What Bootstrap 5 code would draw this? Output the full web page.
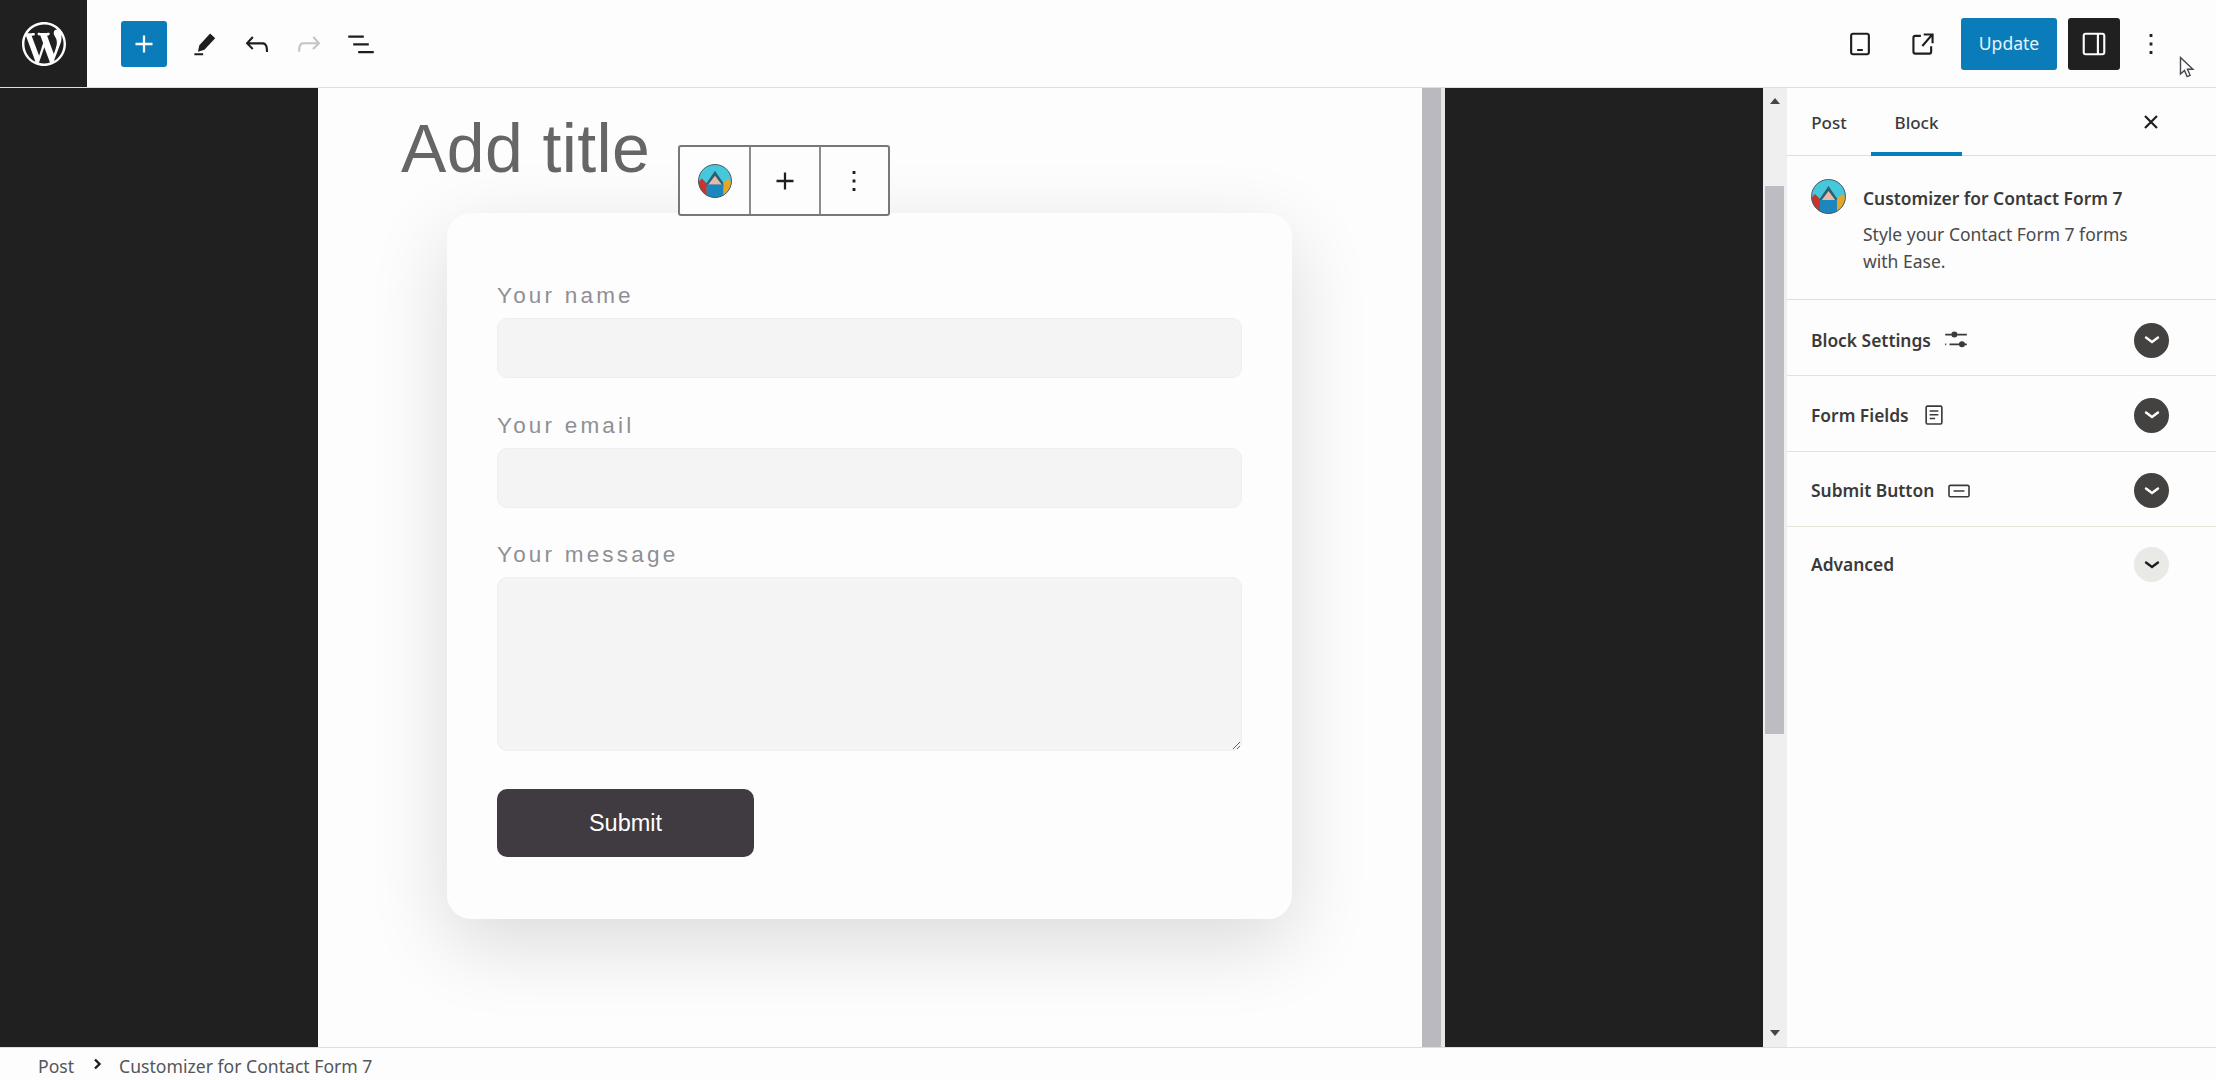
<!DOCTYPE html>
<html lang="en">
<head>
  <meta charset="UTF-8" />
  <meta name="viewport" content="width=device-width, initial-scale=1.0"/>
  <title>Edit Post</title>
  <link href="https://cdn.jsdelivr.net/npm/bootstrap@5.3.3/dist/css/bootstrap.min.css" rel="stylesheet" />
<style>
  html, body { height: 100%; }
  body {
    background: #fdfdfd;
    color: #3a3a3a;
    font-family: "Noto Sans", sans-serif;
    overflow: hidden;
  }
  svg { display: block; fill: currentColor; }

  /* top bar */
  .top-bar { height: 88px; border-bottom: 1px solid #dedee2; flex-shrink: 0; }
  .wp-logo { width: 87px; height: 87px; background: #202020; color: #fdfdfd; }
  .tool-btn { width: 52px; height: 52px; color: #1e1e1e; }
  .tool-btn svg { width: 34px; height: 34px; }
  .tool-off { color: #c4c4c8; }
  .add-btn { width: 46px; height: 46px; background: #0a7cba; color: #fdfdfd; border-radius: 3px; margin-left: 34px; margin-right: 12px; }
  .add-btn svg { width: 34px; height: 34px; }
  .update-btn {
    width: 96px; height: 52px; padding: 0; border: 0; border-radius: 3px;
    background: #0a7cba; color: #e4f3fb; font-size: 17.5px; margin: 0 11px 0 12px;
  }
  .side-btn { background: #202020; color: #fdfdfd; border-radius: 3px; }
  .more-btn { margin-left: 5px; margin-right: 39px; }
  .open-btn { margin-left: 11px; }
  .mouse-arrow { position: absolute; left: 2179px; top: 56px; width: 16px; height: 23px; }

  /* editor area */
  .work-area { min-height: 0; }
  .dark-gutter { width: 318px; background: #202020; flex-shrink: 0; }
  .post-canvas { width: 1104px; background: #fdfdfd; flex-shrink: 0; }
  .canvas-bar { width: 19px; background: #b9b9bf; flex-shrink: 0; }
  .canvas-strip { width: 4px; background: #e6e6e6; flex-shrink: 0; }
  .post-title {
    font-family: "Liberation Sans", Arial, sans-serif;
    font-size: 68px; line-height: 78px; letter-spacing: .4px; color: #666; margin: 21px 0 0 83px;
  }
  .block-tools {
    position: absolute; left: 360px; top: 57px; height: 71px; width: 212px;
    border: 2px solid #77777c; border-radius: 3px; background: #fdfdfd; z-index: 2;
  }
  .block-tools > div { width: 70px; color: #1e1e1e; }
  .block-tools > div + div { border-left: 2px solid #8c8c8c; }
  .block-tools .tool-icon { width: 34px; height: 34px; }

  .form-shell {
    width: 845px; height: 706px; margin: 26px 0 0 129px; padding: 67px 50px 0;
    border: 0; border-radius: 24px; background: #fdfdfd;
    box-shadow: 0 24px 80px rgba(0, 0, 0, .14);
    font-family: "Liberation Sans", Arial, sans-serif;
  }
  .form-shell label {
    font-size: 22.5px; line-height: 30px; letter-spacing: 3.2px; color: #8f8f95;
    padding-top: 1px; margin: 0 0 7px; display: block;
  }
  .form-shell .form-control {
    background: #f4f4f4; border: 1px solid #efefef; border-radius: 10px; box-shadow: none;
  }
  .form-shell input.form-control { height: 60px; margin-bottom: 32px; }
  .form-shell input#your-email { margin-bottom: 31px; }
  .form-shell textarea.form-control { height: 174px; resize: vertical; }
  .send-btn {
    width: 257px; height: 68px; margin-top: 38px; padding: 2px 0 0; border: 0; border-radius: 10px;
    background: #3f3b40; color: #fff; font-size: 23.5px;
  }

  /* inner scrollbar */
  .side-scroll { width: 24px; background: #efeff0; flex-shrink: 0; }
  .side-scroll .thumb { position: absolute; left: 2px; right: 3px; top: 98px; height: 548px; background: #bcbcc2; }
  .side-scroll .arrow-up, .side-scroll .arrow-down {
    position: absolute; left: 7px; width: 0; height: 0;
    border-left: 5px solid transparent; border-right: 5px solid transparent;
  }
  .side-scroll .arrow-up { top: 10px; border-bottom: 6px solid #45454a; }
  .side-scroll .arrow-down { bottom: 11px; border-top: 6px solid #45454a; }

  /* settings sidebar */
  .settings { width: 429px; flex-shrink: 0; background: #fdfdfd; }
  .settings-tabs { height: 68px; border-bottom: 1px solid #dedee2; padding: 0 48px 0 0; flex-shrink: 0; }
  .settings-tabs .nav-link {
    color: #3a3a3a; font-size: 17px; font-weight: 500; padding: 2px 0 0; height: 68px; line-height: 66px;
    text-align: center; border-radius: 0;
  }
  .tab-post { width: 84px; }
  .tab-block { width: 91px; border-bottom: 4px solid #0a7cba; }
  .tab-close { width: 34px; height: 34px; color: #1e1e1e; }
  .tab-close svg { width: 18px; height: 18px; fill: none; stroke: currentColor; stroke-width: 2.2; }
  .block-info { height: 144px; padding: 23px 24px 0; border-bottom: 1px solid #dedee2; flex-shrink: 0; }
  .block-info > div { margin-left: 1px; }
  .block-info h2 { font-size: 17.4px; line-height: 22px; font-weight: 600; margin: 8px 0 12px; color: #3a3a3a; }
  .block-info p { font-size: 17.5px; line-height: 27px; margin: 0; color: #4a4a4a; }
  .plugin-icon { width: 35px; height: 35px; flex-shrink: 0; }
  .panel-row {
    background: transparent; border: 0; border-bottom: 1px solid #e2e2d8; border-radius: 0;
    padding: 3px 47px 0 24px; font-size: 17.4px; font-weight: 600; color: #3a3a3a;
  }
  .panel-row.row-a { height: 76px; }
  .panel-row.row-top { padding-top: 5px; }
  .panel-row.row-b { height: 75px; }
  .panel-row.row-last { height: 75px; padding-top: 0; border-bottom: 0; }
  .panel-row .row-icon { width: 26px; height: 26px; margin-left: 12px; color: #3a3a3a; }
  .toggle-dot { width: 35px; height: 35px; border-radius: 50%; background: #444240; color: #fdfdfd; margin-left: auto; }
  .toggle-dot.soft { background: #e9e9e6; color: #1e1e1e; }
  .toggle-dot svg { width: 18px; height: 18px; fill: none; stroke: currentColor; stroke-width: 2.4; }

  /* breadcrumb */
  .crumbs { height: 33px; border-top: 1px solid #dedee2; padding: 5px 0 0 38px; font-size: 17.6px; color: #55555a; flex-shrink: 0; }
  .crumbs svg { width: 10px; height: 12px; margin: 0 17px 6px 18px; color: #1e1e1e; fill: none; stroke: currentColor; stroke-width: 2.4; }
</style>
</head>
<body class="d-flex flex-column">
  <svg width="0" height="0" class="position-absolute">
    <defs>
      <symbol id="plugin-logo" viewBox="0 0 35 35">
        <clipPath id="logo-clip"><circle cx="17.5" cy="17.5" r="17"/></clipPath>
        <g clip-path="url(#logo-clip)">
          <rect width="35" height="35" fill="#46c7dc"/>
          <path d="M6 24l11.5-17L29 24z" fill="#2b5f73"/>
          <path d="M10 22l7.5-10L25 22z" fill="#e6b9a8"/>
          <path d="M0 19l4-4 5 5v15H0z" fill="#c4352e"/>
          <path d="M35 19l-4-4-5 5v15h9z" fill="#e4a72a"/>
          <rect x="9" y="21" width="17" height="14" fill="#1c86bf"/>
        </g>
        <circle cx="17.5" cy="17.5" r="17" fill="none" stroke="#4a5a66" stroke-width="1"/>
      </symbol>
      <symbol id="chev" viewBox="0 0 18 18"><path d="M3 6.5l6 4.5 6-4.5" stroke-linecap="round"/></symbol>
    </defs>
  </svg>

  <header class="top-bar d-flex align-items-center">
    <div class="wp-logo d-flex align-items-center justify-content-center">
      <svg width="44" height="44" viewBox="0 0 20 20"><path d="M20 10c0-5.51-4.49-10-10-10C4.48 0 0 4.49 0 10c0 5.52 4.48 10 10 10 5.51 0 10-4.48 10-10zM7.78 15.37L4.37 6.22c.55-.02 1.17-.08 1.17-.08.5-.06.44-1.13-.06-1.11 0 0-1.45.11-2.37.11-.18 0-.37 0-.58-.01C4.12 2.69 6.87 1.11 10 1.11c2.33 0 4.45.87 6.05 2.34-.68-.11-1.65.39-1.65 1.58 0 .74.45 1.36.9 2.1.35.61.55 1.36.55 2.46 0 1.49-1.4 5-1.4 5l-3.03-8.37c.54-.02.82-.17.82-.17.5-.05.44-1.25-.06-1.22 0 0-1.44.12-2.38.12-.87 0-2.33-.12-2.33-.12-.5-.03-.56 1.2-.06 1.22l.92.08 1.26 3.41zM17.41 10c.24-.64.74-1.87.43-4.25.7 1.29 1.05 2.71 1.05 4.25 0 3.29-1.73 6.24-4.4 7.78.97-2.59 1.94-5.2 2.92-7.78zM6.1 18.09C3.12 16.65 1.11 13.53 1.11 10c0-1.3.23-2.48.72-3.59C3.25 10.3 4.67 14.2 6.1 18.09zm4.03-6.63l2.58 6.98c-.86.29-1.76.45-2.71.45-.79 0-1.57-.11-2.29-.33.81-2.38 1.62-4.74 2.42-7.1z"/></svg>
    </div>
    <div class="add-btn d-flex align-items-center justify-content-center">
      <svg viewBox="0 0 24 24"><path d="M18 11.2h-5.2V6h-1.6v5.2H6v1.6h5.2V18h1.6v-5.2H18z"/></svg>
    </div>
    <div class="tool-btn d-flex align-items-center justify-content-center">
      <svg viewBox="0 0 24 24"><path d="M15.6 4.6l3.6 3.3-7.6 8.2-4.6 1.3 1-4.6zM4.5 18.6h6.2v1.4H4.5z"/></svg>
    </div>
    <div class="tool-btn d-flex align-items-center justify-content-center">
      <svg viewBox="0 0 24 24"><path d="M18.3 11.7c-.6-.6-1.4-.9-2.3-.9H6.7l2.9-3.3-1.1-1-4.5 5L8.5 16l1-1-2.7-2.7H16c.5 0 .9.2 1.3.5 1 1 1 3.4 1 4.5v.3h1.5v-.2c0-1.5 0-4.3-1.5-5.7z"/></svg>
    </div>
    <div class="tool-btn tool-off d-flex align-items-center justify-content-center">
      <svg viewBox="0 0 24 24"><path d="M15.6 6.5l-1.1 1 2.9 3.3H8c-.9 0-1.7.3-2.3.9-1.4 1.5-1.4 4.2-1.4 5.6v.2h1.5v-.3c0-1.1 0-3.5 1-4.5.3-.3.7-.5 1.3-.5h9.2L14.3 15l1.1 1.1 4.6-4.6-4.4-5z"/></svg>
    </div>
    <div class="tool-btn d-flex align-items-center justify-content-center">
      <svg viewBox="0 0 24 24"><path d="M3 6h11v1.5H3V6zm3.5 5.5h11V13h-11v-1.5zM21 17H10v1.5h11V17z"/></svg>
    </div>

    <div class="ms-auto d-flex align-items-center">
      <div class="tool-btn d-flex align-items-center justify-content-center">
        <svg viewBox="0 0 24 24"><path d="M17 4H7c-1.1 0-2 .9-2 2v12c0 1.1.9 2 2 2h10c1.1 0 2-.9 2-2V6c0-1.1-.9-2-2-2zm.5 14c0 .3-.2.5-.5.5H7c-.3 0-.5-.2-.5-.5V6c0-.3.2-.5.5-.5h10c.3 0 .5.2.5.5v12zM10 15.5h4V17h-4z"/></svg>
      </div>
      <div class="tool-btn open-btn d-flex align-items-center justify-content-center">
        <svg viewBox="0 0 24 24"><path d="M19.5 4.5h-7V6h4.44l-5.97 6.97 1.14.98L18 7.03V11.5h1.5v-7zm-13 1a2 2 0 0 0-2 2v10a2 2 0 0 0 2 2h10a2 2 0 0 0 2-2v-4h-1.5v4a.5.5 0 0 1-.5.5h-10a.5.5 0 0 1-.5-.5v-10a.5.5 0 0 1 .5-.5h4V5.5h-4z"/></svg>
      </div>
      <button class="btn update-btn">Update</button>
      <div class="tool-btn side-btn d-flex align-items-center justify-content-center">
        <svg viewBox="0 0 24 24"><path d="M18 4H6c-1.1 0-2 .9-2 2v12c0 1.1.9 2 2 2h12c1.1 0 2-.9 2-2V6c0-1.1-.9-2-2-2zM6 18.5c-.3 0-.5-.2-.5-.5V6c0-.3.2-.5.5-.5h8v13H6zm12.5-.5c0 .3-.2.5-.5.5h-2.5v-13H18c.3 0 .5.2.5.5v12z"/></svg>
      </div>
      <div class="tool-btn more-btn d-flex align-items-center justify-content-center">
        <svg viewBox="0 0 24 24"><path d="M13 19h-2v-2h2v2zm0-6h-2v-2h2v2zm0-6h-2V5h2v2z"/></svg>
      </div>
    </div>
  </header>

  <svg class="mouse-arrow" viewBox="0 0 16 23"><path d="M1.5 1.5v16.5l4-3.6 2.6 6.2 3-1.3-2.6-6h5.4z" fill="#fdfdfd" stroke="#45454c" stroke-width="1.4"/></svg>

  <main class="work-area d-flex flex-grow-1">
    <div class="dark-gutter"></div>
    <div class="post-canvas position-relative">
      <div class="post-title">Add title</div>
      <div class="block-tools d-flex">
        <div class="d-flex align-items-center justify-content-center"><svg class="tool-icon"><use href="#plugin-logo"/></svg></div>
        <div class="d-flex align-items-center justify-content-center"><svg class="tool-icon" viewBox="0 0 24 24"><path d="M18 11.2h-5.2V6h-1.6v5.2H6v1.6h5.2V18h1.6v-5.2H18z"/></svg></div>
        <div class="d-flex align-items-center justify-content-center"><svg class="tool-icon" viewBox="0 0 24 24"><path d="M13 19h-2v-2h2v2zm0-6h-2v-2h2v2zm0-6h-2V5h2v2z"/></svg></div>
      </div>
      <form class="card form-shell">
        <label for="your-name">Your name</label>
        <input id="your-name" type="text" class="form-control" />
        <label for="your-email">Your email</label>
        <input id="your-email" type="text" class="form-control" />
        <label for="your-message">Your message</label>
        <textarea id="your-message" class="form-control"></textarea>
        <div><button type="button" class="btn send-btn">Submit</button></div>
      </form>
    </div>
    <div class="canvas-bar"></div>
    <div class="canvas-strip"></div>
    <div class="dark-gutter"></div>
    <div class="side-scroll position-relative">
      <div class="arrow-up"></div>
      <div class="thumb"></div>
      <div class="arrow-down"></div>
    </div>

    <aside class="settings d-flex flex-column">
      <div class="settings-tabs nav d-flex align-items-center">
        <a class="nav-link tab-post" href="#">Post</a>
        <a class="nav-link tab-block" href="#">Block</a>
        <div class="tab-close ms-auto d-flex align-items-center justify-content-center">
          <svg viewBox="0 0 18 18"><path d="M3 3l12 12M15 3L3 15"/></svg>
        </div>
      </div>
      <div class="block-info d-flex gap-3">
        <svg class="plugin-icon"><use href="#plugin-logo"/></svg>
        <div>
          <h2>Customizer for Contact Form 7</h2>
          <p>Style your Contact Form 7 forms<br>with Ease.</p>
        </div>
      </div>
      <div class="list-group">
        <div class="list-group-item panel-row row-a row-top d-flex align-items-center">
          Block Settings
          <svg class="row-icon" viewBox="0 0 24 24"><path d="M2 6.2h6.2v1.6H2zM13 6.2h9v1.6h-9zM6 15.2h9v1.6H6zM19.8 15.2H22v1.6h-2.2zM2 15.2h1v1.6H2z"/><circle cx="10.5" cy="7" r="2.8"/><circle cx="17.5" cy="16" r="2.8"/></svg>
          <span class="toggle-dot d-flex align-items-center justify-content-center"><svg><use href="#chev"/></svg></span>
        </div>
        <div class="list-group-item panel-row row-a d-flex align-items-center">
          Form Fields
          <svg class="row-icon" viewBox="0 0 24 24"><path d="M18 3H6a2 2 0 0 0-2 2v14a2 2 0 0 0 2 2h12a2 2 0 0 0 2-2V5a2 2 0 0 0-2-2zm.5 16c0 .3-.2.5-.5.5H6c-.3 0-.5-.2-.5-.5V5c0-.3.2-.5.5-.5h12c.3 0 .5.2.5.5zM8 7.5h8V9H8zM8 11h8v1.5H8zM8 14.5h5V16H8z"/></svg>
          <span class="toggle-dot d-flex align-items-center justify-content-center"><svg><use href="#chev"/></svg></span>
        </div>
        <div class="list-group-item panel-row row-b d-flex align-items-center">
          Submit Button
          <svg class="row-icon" viewBox="0 0 24 24"><path d="M20 6H4a2 2 0 0 0-2 2v8a2 2 0 0 0 2 2h16a2 2 0 0 0 2-2V8a2 2 0 0 0-2-2zm.5 10c0 .3-.2.5-.5.5H4c-.3 0-.5-.2-.5-.5V8c0-.3.2-.5.5-.5h16c.3 0 .5.2.5.5zM7 11.2h10v1.6H7z"/></svg>
          <span class="toggle-dot d-flex align-items-center justify-content-center"><svg><use href="#chev"/></svg></span>
        </div>
        <div class="list-group-item panel-row row-last d-flex align-items-center">
          Advanced
          <span class="toggle-dot soft d-flex align-items-center justify-content-center"><svg><use href="#chev"/></svg></span>
        </div>
      </div>
    </aside>
  </main>

  <footer class="crumbs d-flex align-items-center">
    <span>Post</span>
    <svg viewBox="0 0 10 12"><path d="M3 1.5L7.5 6 3 10.5"/></svg>
    <span>Customizer for Contact Form 7</span>
  </footer>

  <script src="https://cdn.jsdelivr.net/npm/bootstrap@5.3.3/dist/js/bootstrap.bundle.min.js"></script>
</body>
</html>
